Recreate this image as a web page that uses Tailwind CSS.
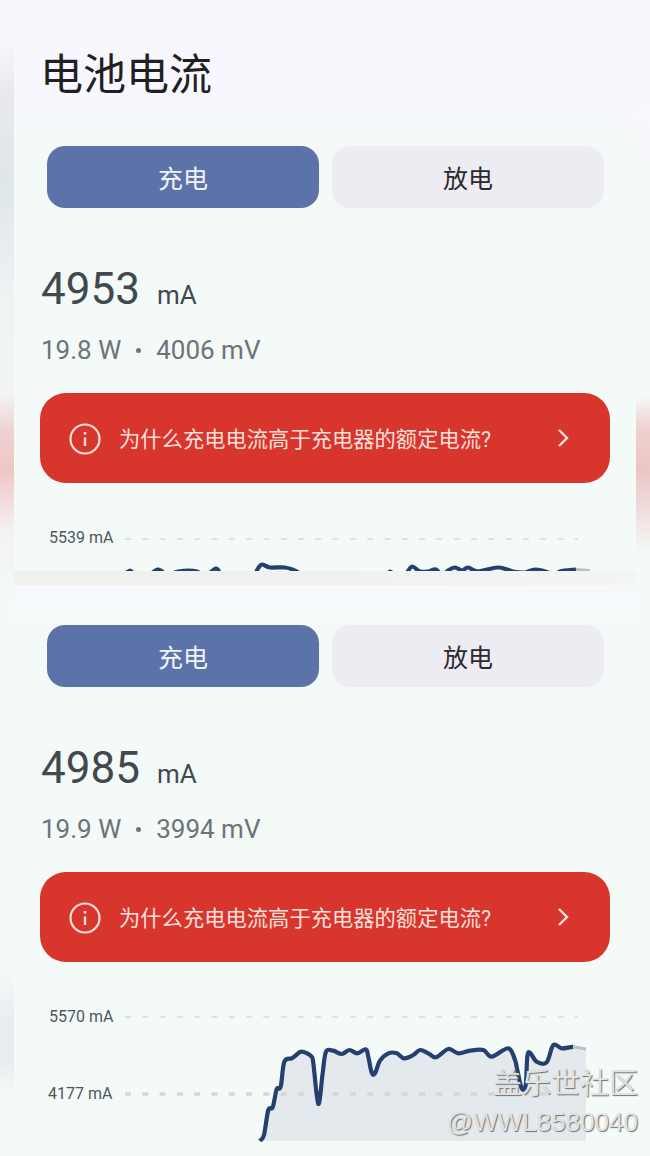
<!DOCTYPE html>
<html lang="zh">
<head>
  <meta charset="UTF-8" />
  <meta name="viewport" content="width=device-width, initial-scale=1.0" />
  <title>电池电流</title>
  <script src="https://cdn.jsdelivr.net/npm/@tailwindcss/browser@4"></script>
</head>
<body class="bg-[#f4faf8] font-['Roboto','Noto_Sans_CJK_SC',sans-serif]">
  <div class="relative grid grid-cols-[14px_622px_14px] w-[650px] h-[1156px] overflow-hidden">
    <!-- Blurred left edge -->
    <div class="bg-[linear-gradient(to_bottom,#f8f7fe_40px,#e9e9ee_90px,#dfe6ea_180px,#eef3f4_300px,#f1f4f3_395px,#efd2d0_430px,#f0c6c6_470px,#f4f2f1_530px,#f4faf8_600px,#f4faf8_970px,#e9ecf0_1020px,#e9ecf0_1060px,#f4faf8_1095px)]"></div>

    <main class="flex flex-col">
      <header class="h-[118px] bg-[#f8f7fe] pl-[26px] pt-[48px]">
        <h1 class="text-[43px] leading-[54px] font-normal text-[#1f1f24]">电池电流</h1>
      </header>

      <!-- First capture -->
      <section class="h-[453px] bg-[linear-gradient(to_bottom,#f5f9f9,#f4faf8_60px)] pt-[28px] flex flex-col">
        <div class="flex gap-[13px] pl-[33px]">
          <div class="w-[272px] h-[62px] pt-[5px] rounded-[18px] bg-[#5c73a9] flex items-center justify-center text-[25px] text-[#f1f3f8]">充电</div>
          <div class="w-[272px] h-[62px] pt-[5px] rounded-[18px] bg-[#eeecf3] flex items-center justify-center text-[25px] text-[#2a2a2e]">放电</div>
        </div>
        <div class="pl-[27px] mt-[55px] flex items-baseline gap-[17px] text-[#41494f] h-[52px] leading-[52px]">
          <span class="text-[44px]">4953</span><span class="text-[26px]">mA</span>
        </div>
        <div class="pl-[27px] mt-[19px] h-[32px] flex items-center gap-[15px] text-[26px] text-[#6c7478]">
          <span>19.8 W</span><span class="w-[5px] h-[5px] rounded-full bg-[#6c7478]"></span><span>4006 mV</span>
        </div>
        <div class="ml-[26px] mt-[27px] w-[570px] h-[90px] rounded-[26px] bg-[#d8352c] flex items-center pl-[29px] pr-[41px] text-[#f8e0dc]">
          <svg class="w-[32px] h-[32px] mt-[2px] shrink-0" viewBox="0 0 32 32" fill="none" stroke="currentColor">
            <circle cx="16" cy="16" r="14.5" stroke-width="2.2" />
            <path d="M16 14.5v8.5" stroke-width="2.4" />
            <path d="M16 9v2.6" stroke-width="2.6" />
          </svg>
          <span class="ml-[18px] pt-[3px] text-[21.3px] flex-1">为什么充电电流高于充电器的额定电流?</span>
          <svg class="w-[12px] h-[20px]" viewBox="0 0 12 20" fill="none" stroke="currentColor" stroke-width="2.4"><path d="M2 2l8 8-8 8" /></svg>
        </div>
        <svg class="mt-[42px] block" width="622" height="46" viewBox="14 525 622 46">
          <text x="49" y="543" font-size="16" fill="#4f575c">5539 mA</text>
          <line x1="125" x2="578" y1="539" y2="539" stroke="#d6dada" stroke-width="1.6" stroke-dasharray="6 11.3" />
          <path id="line1" fill="none" stroke="#24406f" stroke-width="4.2" stroke-linejoin="round" transform="translate(0 1.5)" />
          <path d="M576 569.5L590 570.5" fill="none" stroke="#b8c0cc" stroke-width="3" />
        </svg>
      </section>

      <div class="h-[14px] bg-[linear-gradient(to_right,#eff1ef,#f0f2f1_50%,#f2f5f4)]"></div>

      <!-- Second capture -->
      <section class="h-[571px] bg-[linear-gradient(to_bottom,#f8f8fd,#f4faf8_50px)] pt-[40px] flex flex-col">
        <div class="flex gap-[13px] pl-[33px]">
          <div class="w-[272px] h-[62px] pt-[5px] rounded-[18px] bg-[#5c73a9] flex items-center justify-center text-[25px] text-[#f1f3f8]">充电</div>
          <div class="w-[272px] h-[62px] pt-[5px] rounded-[18px] bg-[#eeecf3] flex items-center justify-center text-[25px] text-[#2a2a2e]">放电</div>
        </div>
        <div class="pl-[27px] mt-[55px] flex items-baseline gap-[17px] text-[#41494f] h-[52px] leading-[52px]">
          <span class="text-[44px]">4985</span><span class="text-[26px]">mA</span>
        </div>
        <div class="pl-[27px] mt-[19px] h-[32px] flex items-center gap-[15px] text-[26px] text-[#6c7478]">
          <span>19.9 W</span><span class="w-[5px] h-[5px] rounded-full bg-[#6c7478]"></span><span>3994 mV</span>
        </div>
        <div class="ml-[26px] mt-[27px] w-[570px] h-[90px] rounded-[26px] bg-[#d8352c] flex items-center pl-[29px] pr-[41px] text-[#f8e0dc]">
          <svg class="w-[32px] h-[32px] mt-[2px] shrink-0" viewBox="0 0 32 32" fill="none" stroke="currentColor">
            <circle cx="16" cy="16" r="14.5" stroke-width="2.2" />
            <path d="M16 14.5v8.5" stroke-width="2.4" />
            <path d="M16 9v2.6" stroke-width="2.6" />
          </svg>
          <span class="ml-[18px] pt-[3px] text-[21.3px] flex-1">为什么充电电流高于充电器的额定电流?</span>
          <svg class="w-[12px] h-[20px]" viewBox="0 0 12 20" fill="none" stroke="currentColor" stroke-width="2.4"><path d="M2 2l8 8-8 8" /></svg>
        </div>
        <svg class="mt-[42px] block" width="622" height="152" viewBox="14 1004 622 152">
          <path id="area2" fill="#e4e9ed" />
          <text x="49" y="1022" font-size="16" fill="#4f575c">5570 mA</text>
          <text x="48" y="1099" font-size="16" fill="#4f575c">4177 mA</text>
          <line x1="125" x2="578" y1="1017" y2="1017" stroke="#d6dada" stroke-width="1.6" stroke-dasharray="6 11.3" />
          <line x1="125" x2="578" y1="1094" y2="1094" stroke="#d3d7d8" stroke-width="3.4" stroke-dasharray="6 11.3" />
          <path id="line2" fill="none" stroke="#24406f" stroke-width="4.2" stroke-linejoin="round" />
          <path d="M573 1046.7L586 1049" fill="none" stroke="#b8c0cc" stroke-width="3" />
        </svg>
      </section>
    </main>

    <!-- Blurred right edge -->
    <div class="bg-[linear-gradient(to_bottom,#f8f7fe_100px,#f4f8f6_200px,#f4faf8_395px,#efd0ce_430px,#ebc6c6_470px,#f2e6e6_525px,#f4faf8_555px)]"></div>

    <!-- Watermark -->
    <div class="absolute right-[12px] top-[1065px] flex flex-col items-end text-[#dfe2e3] [text-shadow:1px_1px_1px_#6f7375]">
      <span class="text-[29px] leading-[38px]">盖乐世社区</span>
      <span class="text-[26px] leading-[30px] mt-[4px] font-['Liberation_Sans']">@WWL8580040</span>
    </div>
  </div>

  <script>
    // Points read off the screenshot, page coordinates
    const top1 = [[122,576],[130,569],[137,576],[146,576],[158,568],[168,574],[178,570],[197,570],[204,576],[216,567],[224,575],[250,577],[258,567],[262,563],[270,566],[285,566],[297,570],[301,576],[380,577],[390,570],[396,576],[406,572],[412,565],[420,570],[428,570],[436,568],[442,574],[448,569],[455,566],[462,569],[468,566],[478,570],[498,566],[513,570],[525,571],[535,568],[548,571],[555,576],[560,570],[576,568]];
    const curve2 = [[260,1141],[264,1135],[268.3,1110],[272.7,1107.3],[276.7,1089.3],[280.7,1086.7],[284.3,1061.7],[291.7,1058.3],[295,1056],[301.7,1051.7],[311,1056],[313.3,1063],[318.3,1104],[322.7,1073],[326,1051.7],[333.3,1050.7],[341.7,1054],[349.3,1050],[357.3,1053.3],[365.7,1049.3],[368.3,1056.7],[371.7,1072.7],[375,1073.3],[380,1060.7],[388.3,1053.3],[396.7,1053.3],[404,1058.3],[413.3,1055],[420,1050],[428.3,1053.3],[436,1057.3],[448.3,1049],[458.3,1053.3],[470,1050.7],[483.3,1050],[491.7,1056.7],[508.3,1048.3],[515,1060],[517.3,1070],[521.7,1088.3],[525.7,1085],[527.3,1056.7],[530,1052.7],[536.7,1061.7],[546.7,1062.3],[553.3,1045],[561.7,1048.3],[573.3,1046.7]];

    // Catmull-Rom through the points, written as cubic beziers
    function smooth(p) {
      let d = `M${p[0][0]} ${p[0][1]}`;
      for (let i = 0; i < p.length - 1; i++) {
        const a = p[i - 1] || p[i], b = p[i], c = p[i + 1], e = p[i + 2] || c;
        const x1 = b[0] + (c[0] - a[0]) / 6, y1 = b[1] + (c[1] - a[1]) / 6;
        const x2 = c[0] - (e[0] - b[0]) / 6, y2 = c[1] - (e[1] - b[1]) / 6;
        d += `C${x1} ${y1} ${x2} ${y2} ${c[0]} ${c[1]}`;
      }
      return d;
    }

    document.getElementById('line1').setAttribute('d', smooth(top1));
    document.getElementById('line2').setAttribute('d', smooth(curve2));
    document.getElementById('area2').setAttribute('d', smooth(curve2) + 'L586 1049L586 1141Z');
  </script>
</body>
</html>
